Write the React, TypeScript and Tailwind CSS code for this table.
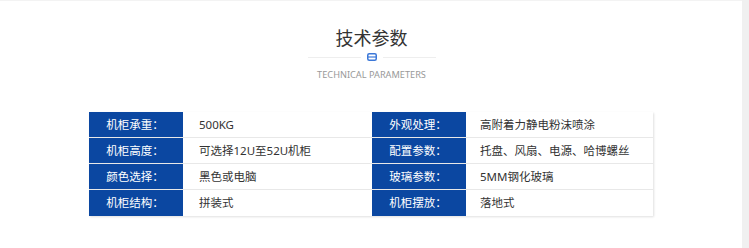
import React from "react";

const rows = [
  ["机柜承重：", "500KG", "外观处理：", "高附着力静电粉沫喷涂"],
  ["机柜高度：", "可选择12U至52U机柜", "配置参数：", "托盘、风扇、电源、哈博螺丝"],
  ["颜色选择：", "黑色或电脑", "玻璃参数：", "5MM钢化玻璃"],
  ["机柜结构：", "拼装式", "机柜摆放：", "落地式"],
];

function Label({ text }: { text: string }) {
  return (
    <div className="w-[94px] shrink-0 bg-[#0b47a1] text-white flex items-center justify-center pr-[2px]">
      {text}
    </div>
  );
}

function Value({ text, className }: { text: string; className: string }) {
  return <div className={`${className} shrink-0 flex items-center text-[#333]`}>{text}</div>;
}

export default function App() {
  return (
    <div
      className="flex w-[749px] h-[248px] bg-[#f0f0f0]"
      style={{ fontFamily: '"Noto Sans", "Noto Sans CJK SC", sans-serif' }}
    >
      <div className="w-[742px] h-full bg-white border-t border-[#f3f3f3] flex flex-col items-center">
        <h2 className="pt-[24px] text-[18px] leading-[27px] text-[#333] pl-[1px]">技术参数</h2>
        <div className="mt-[1px] flex items-center gap-[6px] pl-[1px]">
          <div className="w-[53px] h-px bg-[#eeeeee]" />
          <svg width="10" height="8" viewBox="0 0 10 8" className="block">
            <rect x="0.75" y="0.75" width="8.5" height="6.5" rx="1.5" fill="none" stroke="#3c78d8" strokeWidth="1.5" />
            <line x1="1" y1="4" x2="9" y2="4" stroke="#3c78d8" strokeWidth="1.2" />
          </svg>
          <div className="w-[53px] h-px bg-[#eeeeee]" />
        </div>
        <p className="mt-[6px] text-[9.2px] leading-[16px] text-[#999] pl-[1px]">TECHNICAL PARAMETERS</p>

        <div className="mt-[29px] w-[564px] shadow-[1px_1px_2px_rgba(0,0,0,0.12)] text-[11.5px]">
          {rows.map((r, i) => (
            <div
              key={i}
              className={`flex h-[26px] ${i < rows.length - 1 ? "border-b border-[#e8e8e8]" : ""}`}
            >
              <Label text={r[0]} />
              <Value text={r[1]} className="w-[189px] pl-[16px]" />
              <Label text={r[2]} />
              <Value text={r[3]} className="w-[187px] pl-[14px]" />
            </div>
          ))}
        </div>
      </div>
    </div>
  );
}
